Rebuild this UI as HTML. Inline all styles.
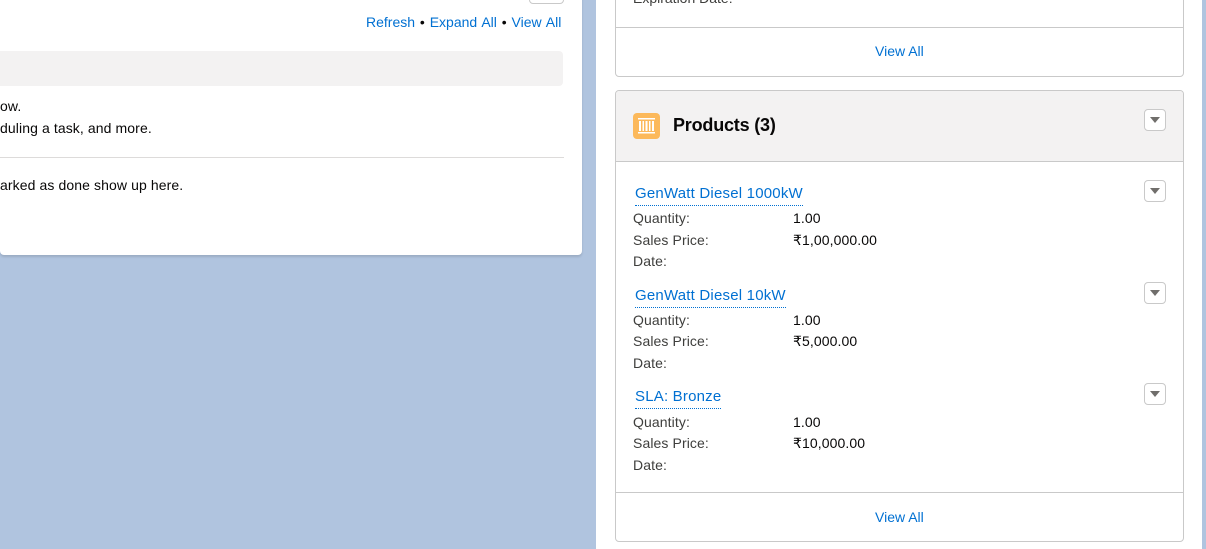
<!DOCTYPE html>
<html><head><style>
*{margin:0;padding:0;box-sizing:border-box}
body{width:1206px;height:549px;background:#b0c4df;position:relative;overflow:hidden;font-family:"Liberation Sans",sans-serif;font-size:14px;color:#080707}
.a{position:absolute}
.link{color:#0070d2}
.lbl{color:#3e3e3c}
.btn{position:absolute;width:22px;height:22px;border:1px solid #c9c9c9;border-radius:4px;background:#fff}
.btn:after{content:"";position:absolute;left:5px;top:7px;border-left:5px solid transparent;border-right:5px solid transparent;border-top:6px solid #706e6b}
.pl{position:absolute;left:635px;color:#0070d2;font-size:15px;letter-spacing:0.2px;border-bottom:1px dotted #0070d2;padding-bottom:2px;line-height:18px}
.t{letter-spacing:0.1px}
</style></head><body>
<div class="a" style="left:0;top:-10px;width:582px;height:265px;background:#fff;border-radius:4px;box-shadow:0 2px 2px rgba(0,0,0,.12)"></div>
<div class="a" style="left:529px;top:-20px;width:35px;height:24px;border:1px solid #c9c9c9;border-radius:4px;background:#fff"></div>
<div class="a link" style="left:366px;top:14px;word-spacing:1px">Refresh <span style="color:#080707">•</span> Expand All <span style="color:#080707">•</span> View All</div>
<div class="a" style="left:0;top:51px;width:563px;height:35px;background:#f3f2f2;border-radius:0 4px 4px 0"></div>
<div class="a t" style="left:0;top:98px">ow.</div>
<div class="a t" style="left:0;top:120px">duling a task, and more.</div>
<div class="a" style="left:0;top:157px;width:564px;height:1px;background:#dddbda"></div>
<div class="a t" style="left:0;top:177px">arked as done show up here.</div>

<div class="a" style="left:596px;top:0;width:606px;height:549px;background:#fff"></div>
<div class="a" style="left:615px;top:-10px;width:569px;height:87px;border:1px solid #c9c9c9;border-radius:4px"></div>
<div class="a lbl" style="left:633px;top:-10px">Expiration Date:</div>
<div class="a" style="left:616px;top:27px;width:567px;height:1px;background:#c9c9c9"></div>
<div class="a link" style="left:875px;top:43px">View All</div>

<div class="a" style="left:615px;top:90px;width:569px;height:452px;border:1px solid #c9c9c9;border-radius:4px;overflow:hidden">
 <div style="height:71px;background:#f3f2f2;border-bottom:1px solid #c9c9c9"></div>
</div>
<div class="a" style="left:633px;top:113px;width:27px;height:26px;background:#fcb95b;border-radius:4px">
 <svg width="27" height="26" viewBox="0 0 27 26"><g fill="#fff"><rect x="5" y="5" width="17" height="1.5"/><rect x="5" y="19" width="17" height="1.5"/><rect x="6" y="8" width="2" height="10"/><rect x="9.5" y="8" width="1.5" height="10"/><rect x="12.5" y="8" width="2" height="10"/><rect x="16" y="8" width="1.5" height="10"/><rect x="19" y="8" width="2" height="10"/></g></svg>
</div>
<div class="a" style="left:673px;top:115px;font-size:18px;font-weight:bold;letter-spacing:-0.2px">Products (3)</div>
<div class="btn" style="left:1144px;top:109px"></div>

<div class="pl" style="top:185px">GenWatt Diesel 1000kW</div>
<div class="btn" style="left:1144px;top:180px"></div>
<div class="a lbl t" style="left:633px;top:210px">Quantity:</div><div class="a t" style="left:793px;top:210px">1.00</div>
<div class="a lbl t" style="left:633px;top:232px">Sales Price:</div><div class="a t" style="left:793px;top:232px">₹1,00,000.00</div>
<div class="a lbl t" style="left:633px;top:253px">Date:</div>

<div class="pl" style="top:287px">GenWatt Diesel 10kW</div>
<div class="btn" style="left:1144px;top:282px"></div>
<div class="a lbl t" style="left:633px;top:312px">Quantity:</div><div class="a t" style="left:793px;top:312px">1.00</div>
<div class="a lbl t" style="left:633px;top:333px">Sales Price:</div><div class="a t" style="left:793px;top:333px">₹5,000.00</div>
<div class="a lbl t" style="left:633px;top:355px">Date:</div>

<div class="pl" style="top:388px">SLA: Bronze</div>
<div class="btn" style="left:1144px;top:383px"></div>
<div class="a lbl t" style="left:633px;top:414px">Quantity:</div><div class="a t" style="left:793px;top:414px">1.00</div>
<div class="a lbl t" style="left:633px;top:435px">Sales Price:</div><div class="a t" style="left:793px;top:435px">₹10,000.00</div>
<div class="a lbl t" style="left:633px;top:457px">Date:</div>

<div class="a" style="left:616px;top:492px;width:567px;height:1px;background:#c9c9c9"></div>
<div class="a link" style="left:875px;top:509px">View All</div>
</body></html>
